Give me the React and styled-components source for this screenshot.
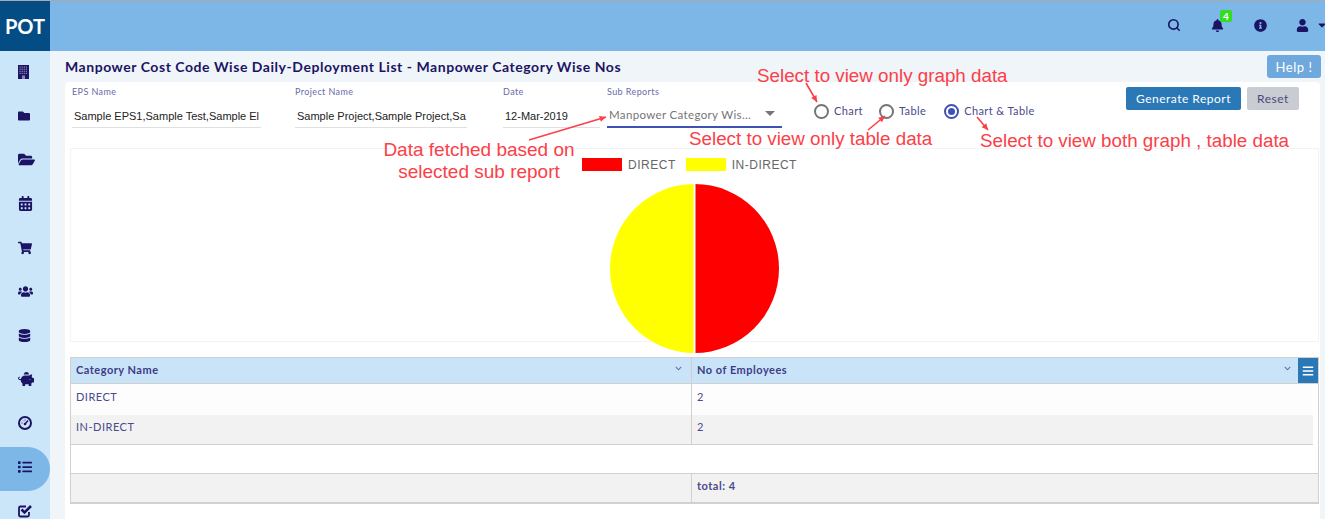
import React from 'react';
import styled, { createGlobalStyle } from 'styled-components';
import {
  FaFolder, FaFolderOpen, FaCalendarAlt, FaShoppingCart, FaUsers, FaDatabase,
  FaPiggyBank, FaList, FaBell, FaInfoCircle, FaUser, FaCaretDown, FaBars, FaChevronDown,
} from 'react-icons/fa';
import { Search } from 'lucide-react';

const NAVY = '#1b1464';

const GlobalStyle = createGlobalStyle`
  html, body { margin: 0; padding: 0; background: #fff; }
  * { box-sizing: border-box; }
  body { font-family: Lato, "Liberation Sans", sans-serif; overflow: hidden; }
`;

const Page = styled.div`
  position: relative;
  width: 1325px;
  height: 519px;
  overflow: hidden;
  display: flex;
  flex-direction: column;
`;

const TopBar = styled.header`
  height: 51px;
  flex: none;
  display: flex;
  align-items: center;
  background: #7cb7e8;
  border-top: 1px solid #a9a9a9;
  color: ${NAVY};
`;

const Logo = styled.div`
  width: 50px;
  height: 100%;
  background: #034c84;
  color: #fff;
  font-size: 20px;
  font-weight: 700;
  display: flex;
  align-items: center;
  justify-content: center;
`;

const TopIcons = styled.div`
  margin: 0 -3px 0 auto;
  display: flex;
  align-items: center;
  gap: 30px;
  padding-bottom: 2px;
  font-size: 13px;
`;

const BellWrap = styled.span`
  position: relative;
  display: flex;
`;

const Badge = styled.span`
  position: absolute;
  top: -9px;
  left: 9px;
  width: 12px;
  height: 12px;
  border-radius: 2px;
  background: #33dd22;
  color: #fff;
  font-size: 10px;
  font-weight: 700;
  line-height: 12px;
  text-align: center;
`;

const UserMenu = styled.span`
  display: flex;
  align-items: center;
  gap: 7px;
  margin-left: -1px;
`;

const Body = styled.div`
  flex: 1;
  display: flex;
  min-height: 0;
`;

const Sidebar = styled.nav`
  width: 50px;
  flex: none;
  padding-top: 1px;
  background: #cbe5f9;
  display: flex;
  flex-direction: column;
`;

const NavItem = styled.div`
  height: 43.9px;
  flex: none;
  display: flex;
  align-items: center;
  padding: 0 0 4px 18px;
  color: ${NAVY};
  background: ${(p) => (p.$active ? '#7cb7e8' : 'transparent')};
  border-radius: ${(p) => (p.$active ? '0 22px 22px 0' : '0')};
`;

const Main = styled.main`
  flex: 1;
  min-width: 0;
  padding: 0 5px 0 15px;
  background: #f0f5f9;
  display: flex;
  flex-direction: column;
`;

const TitleRow = styled.div`
  height: 31px;
  flex: none;
  display: flex;
  align-items: center;
  justify-content: space-between;
`;

const Title = styled.h1`
  margin: 0;
  font-size: 14px;
  font-weight: 700;
  letter-spacing: 0.54px;
  color: ${NAVY};
`;

const HelpButton = styled.button`
  width: 54px;
  height: 23px;
  margin: 0 -1px 0 0;
  padding: 0;
  border: 0;
  border-radius: 3px;
  background: #6fa8dc;
  color: #fff;
  font: 400 13px Lato, sans-serif;
  letter-spacing: 0.5px;
`;

const Panel = styled.section`
  flex: 1;
  min-height: 0;
  background: #fff;
  border-radius: 4px 4px 0 0;
  padding: 0 1px 0 5px;
`;

const FormRow = styled.div`
  height: 66px;
  display: flex;
  align-items: flex-start;
`;

const Field = styled.div`
  width: ${(p) => p.$w}px;
  margin-left: ${(p) => p.$gap}px;
  flex: none;
  padding-top: 5px;
`;

const FieldLabel = styled.div`
  font-size: 9px;
  line-height: 10px;
  letter-spacing: 0.4px;
  color: #6a6aa8;
`;

const FieldValue = styled.div`
  height: 23px;
  margin-top: 8px;
  padding-left: 2px;
  font: 400 11px/22px "Liberation Sans", sans-serif;
  color: #222;
  white-space: nowrap;
  overflow: hidden;
  border-bottom: 1px solid #e0e0e0;
`;

const SelectValue = styled.div`
  height: 24px;
  margin-top: 7px;
  padding: 0 18px 0 2px;
  position: relative;
  font-size: 11.5px;
  line-height: 22px;
  letter-spacing: 0.35px;
  color: #757575;
  white-space: nowrap;
  border-bottom: 2px solid #3f51b5;
`;

const SelectCaret = styled.span`
  position: absolute;
  right: 7px;
  top: 7px;
  border-left: 5px solid transparent;
  border-right: 5px solid transparent;
  border-top: 5px solid #757575;
`;

const RadioGroup = styled.div`
  display: flex;
  align-items: center;
  margin: 20px 0 0 32px;
`;

const RadioItem = styled.label`
  display: flex;
  align-items: center;
  gap: 5px;
  margin-right: ${(p) => p.$mr}px;
  font-size: 11px;
  line-height: 13px;
  letter-spacing: 0.4px;
  color: #4a4a8c;
`;

const RadioCircle = styled.span`
  width: 15px;
  height: 15px;
  margin-top: 2px;
  border-radius: 50%;
  border: 2px solid ${(p) => (p.$on ? '#3f51b5' : '#757575')};
  display: flex;
  align-items: center;
  justify-content: center;
  &::after {
    content: '';
    width: 7px;
    height: 7px;
    border-radius: 50%;
    background: ${(p) => (p.$on ? '#3f51b5' : 'transparent')};
  }
`;

const Actions = styled.div`
  margin: 5px 0 0 auto;
  display: flex;
  gap: 6px;
  padding-right: 20px;
`;

const ActionButton = styled.button`
  height: 23px;
  width: ${(p) => p.$w}px;
  padding: 0;
  border: 0;
  border-radius: 2px;
  background: ${(p) => (p.$primary ? '#2b78b6' : '#c9ccd2')};
  color: ${(p) => (p.$primary ? '#fff' : '#4a4a7c')};
  font: 400 12px Lato, sans-serif;
  letter-spacing: 0.5px;
`;

const ChartBox = styled.div`
  height: 194px;
  width: 1249px;
  border: 1px solid #f3f3f3;
  display: flex;
  flex-direction: column;
  align-items: center;
  padding-top: 9px;
`;

const Legend = styled.div`
  display: flex;
  align-items: center;
  flex: none;
  height: 13px;
  margin-left: -10px;
  font: 400 12px "Liberation Sans", sans-serif;
  letter-spacing: 0.5px;
  color: #666;
`;

const Swatch = styled.span`
  width: 40px;
  height: 13px;
  background: ${(p) => p.$c};
  margin: 0 6px 0 ${(p) => p.$ml}px;
`;

const PieSvg = styled.svg`
  margin-top: 12px;
  display: block;
  flex: none;
  position: relative;
`;

const Grid = styled.div`
  width: 1249px;
  margin-top: 15px;
  border: 1px solid #d0d0d0;
  border-bottom-width: 2px;
  font-size: 11px;
  letter-spacing: 0.5px;
  color: #4a4a8c;
`;

const HeadRow = styled.div`
  height: 26px;
  display: flex;
  background: #c9e4f9;
  border-bottom: 1px solid #d0d0d0;
  font-weight: 700;
  color: #3d3d85;
`;

const HeadCell = styled.div`
  width: ${(p) => (p.$w ? `${p.$w}px` : 'auto')};
  flex: ${(p) => (p.$w ? 'none' : '1')};
  display: flex;
  align-items: center;
  justify-content: space-between;
  padding: 0 ${(p) => p.$pr}px 2px 5px;
  border-right: ${(p) => (p.$w ? '1px solid #d0d0d0' : '0')};
  svg { font-size: 7px; color: #6a6aa8; margin-top: -3px; }
`;

const MenuButton = styled.div`
  width: 20px;
  flex: none;
  background: #2b78b6;
  color: #fff;
  display: flex;
  align-items: center;
  justify-content: center;
  font-size: 12px;
`;

const Rows = styled.div`
  padding-right: 5px;
`;

const Row = styled.div`
  height: ${(p) => p.$h}px;
  display: flex;
  background: ${(p) => p.$bg};
  border-bottom: ${(p) => (p.$line ? '1px solid #d0d0d0' : '0')};
`;

const Cell = styled.div`
  width: ${(p) => (p.$w ? `${p.$w}px` : 'auto')};
  flex: ${(p) => (p.$w ? 'none' : '1')};
  padding: 0 5px 6px;
  display: flex;
  align-items: center;
  font-weight: ${(p) => (p.$bold ? 700 : 400)};
  border-right: ${(p) => (p.$w ? '1px solid #d0d0d0' : '0')};
`;

const EmptyRow = styled.div`
  height: 29px;
  background: #fff;
  border-bottom: 1px solid #d0d0d0;
`;

const Note = styled.div`
  position: absolute;
  left: ${(p) => p.$x}px;
  top: ${(p) => p.$y}px;
  width: ${(p) => (p.$w ? `${p.$w}px` : 'auto')};
  font: 400 ${(p) => p.$size || 18.8}px/22px "Liberation Sans", sans-serif;
  color: #fb4048;
  white-space: nowrap;
  text-align: ${(p) => (p.$w ? 'center' : 'left')};
`;

const ArrowLayer = styled.svg`
  position: absolute;
  left: 0;
  top: 0;
  pointer-events: none;
`;

const BuildingIcon = () => (
  <svg width="11" height="14" viewBox="0 0 11 14">
    <rect width="11" height="14" fill={NAVY} />
    {[0, 1, 2, 3].map((r) =>
      [0, 1, 2, 3].map((c) => (
        <rect key={`${r}-${c}`} x={1.5 + c * 2.1} y={1.5 + r * 2.1} width="1.2" height="1.2" fill="#8c84b8" />
      ))
    )}
    <rect x="4" y="10.5" width="3" height="3.5" fill="#8c84b8" />
  </svg>
);

const GaugeIcon = () => (
  <svg width="14" height="14" viewBox="0 0 14 14">
    <circle cx="7" cy="7" r="6" fill="none" stroke={NAVY} strokeWidth="2" />
    <path d="M7 8 L10 4.5" stroke={NAVY} strokeWidth="1.5" />
    <circle cx="7" cy="8" r="1.3" fill={NAVY} />
    <path d="M3.5 7 h1 M7 3.5 v1 M5 4.6 l.6 .6" stroke={NAVY} strokeWidth="1" />
  </svg>
);

const CheckIcon = () => (
  <svg width="14" height="15" viewBox="0 0 14 15">
    <path d="M11 9 V12 a1.5 1.5 0 0 1 -1.5 1.5 H2.5 A1.5 1.5 0 0 1 1 12 V5 a1.5 1.5 0 0 1 1.5 -1.5 H8" fill="none" stroke={NAVY} strokeWidth="1.8" />
    <path d="M3.5 6.5 L6.5 9.5 L13 3" fill="none" stroke={NAVY} strokeWidth="2.6" />
  </svg>
);

const navIcons = [
  <BuildingIcon />,
  <FaFolder size={12} />,
  <FaFolderOpen size={17} />,
  <FaCalendarAlt size={15} />,
  <FaShoppingCart size={14} />,
  <FaUsers size={15} />,
  <FaDatabase size={13} />,
  <FaPiggyBank size={16} />,
  <GaugeIcon />,
  <FaList size={14} />,
  <CheckIcon />,
];

const arrows = [
  [806, 83, 817, 102],
  [868, 130, 885, 116],
  [977, 117, 988, 130],
  [529, 140, 606, 117],
];

function Arrow({ coords }) {
  const [x1, y1, x2, y2] = coords;
  const a = Math.atan2(y2 - y1, x2 - x1);
  const l = 7;
  const p1 = [x2 - l * Math.cos(a - 0.45), y2 - l * Math.sin(a - 0.45)];
  const p2 = [x2 - l * Math.cos(a + 0.45), y2 - l * Math.sin(a + 0.45)];
  return (
    <g>
      <line x1={x1} y1={y1} x2={x2} y2={y2} stroke="#fb4048" strokeWidth="1.6" />
      <polygon points={`${x2},${y2} ${p1.join(',')} ${p2.join(',')}`} fill="#fb4048" />
    </g>
  );
}

export default function App() {
  return (
    <Page>
      <GlobalStyle />
      <TopBar>
        <Logo>POT</Logo>
        <TopIcons>
          <Search size={14} strokeWidth={2.8} />
          <BellWrap>
            <FaBell />
            <Badge>4</Badge>
          </BellWrap>
          <FaInfoCircle />
          <UserMenu>
            <FaUser />
            <FaCaretDown size={12} />
          </UserMenu>
        </TopIcons>
      </TopBar>
      <Body>
        <Sidebar>
          {navIcons.map((icon, i) => (
            <NavItem key={i} $active={i === 9}>
              {icon}
            </NavItem>
          ))}
        </Sidebar>
        <Main>
          <TitleRow>
            <Title>Manpower Cost Code Wise Daily-Deployment List - Manpower Category Wise Nos</Title>
            <HelpButton>Help !</HelpButton>
          </TitleRow>
          <Panel>
            <FormRow>
              <Field $w={189} $gap={2}>
                <FieldLabel>EPS Name</FieldLabel>
                <FieldValue>Sample EPS1,Sample Test,Sample El</FieldValue>
              </Field>
              <Field $w={172} $gap={34}>
                <FieldLabel>Project Name</FieldLabel>
                <FieldValue>Sample Project,Sample Project,Sa</FieldValue>
              </Field>
              <Field $w={97} $gap={36}>
                <FieldLabel>Date</FieldLabel>
                <FieldValue>12-Mar-2019</FieldValue>
              </Field>
              <Field $w={175} $gap={7}>
                <FieldLabel>Sub Reports</FieldLabel>
                <SelectValue>
                  Manpower Category Wis...
                  <SelectCaret />
                </SelectValue>
              </Field>
              <RadioGroup>
                <RadioItem $mr={16}>
                  <RadioCircle />
                  Chart
                </RadioItem>
                <RadioItem $mr={18}>
                  <RadioCircle />
                  Table
                </RadioItem>
                <RadioItem $mr={0}>
                  <RadioCircle $on />
                  Chart &amp; Table
                </RadioItem>
              </RadioGroup>
              <Actions>
                <ActionButton $primary $w={115}>Generate Report</ActionButton>
                <ActionButton $w={52}>Reset</ActionButton>
              </Actions>
            </FormRow>
            <ChartBox>
              <Legend>
                <Swatch $c="#ff0000" $ml={0} />
                DIRECT
                <Swatch $c="#ffff00" $ml={10} />
                IN-DIRECT
              </Legend>
              <PieSvg width="172" height="172" viewBox="0 0 172 172">
                <path d="M85.5 1 A84.5 84.5 0 0 1 85.5 170 Z" fill="#ff0000" />
                <path d="M85.5 1 A84.5 84.5 0 0 0 85.5 170 Z" fill="#ffff00" />
                <line x1="85.5" y1="0" x2="85.5" y2="171" stroke="#fff" strokeWidth="2" />
              </PieSvg>
            </ChartBox>
            <Grid>
              <HeadRow>
                <HeadCell $w={621} $pr={9}>
                  Category Name
                  <FaChevronDown />
                </HeadCell>
                <HeadCell $pr={7}>
                  No of Employees
                  <FaChevronDown />
                </HeadCell>
                <MenuButton>
                  <FaBars />
                </MenuButton>
              </HeadRow>
              <Rows>
                <Row $h={31} $bg="#fdfdfd">
                  <Cell $w={621}>DIRECT</Cell>
                  <Cell>2</Cell>
                </Row>
                <Row $h={30} $bg="#f2f2f2" $line>
                  <Cell $w={621}>IN-DIRECT</Cell>
                  <Cell>2</Cell>
                </Row>
              </Rows>
              <EmptyRow />
              <Row $h={28} $bg="#f2f2f2">
                <Cell $w={621} />
                <Cell $bold>total: 4</Cell>
              </Row>
            </Grid>
          </Panel>
        </Main>
      </Body>
      <Note $x={757} $y={65}>Select to view only graph data</Note>
      <Note $x={689} $y={128}>Select to view only table data</Note>
      <Note $x={980} $y={130}>Select to view both graph , table data</Note>
      <Note $x={379} $y={139} $w={200} $size={19}>Data fetched based on<br />selected sub report</Note>
      <ArrowLayer width="1325" height="519">
        {arrows.map((c, i) => (
          <Arrow key={i} coords={c} />
        ))}
      </ArrowLayer>
    </Page>
  );
}
